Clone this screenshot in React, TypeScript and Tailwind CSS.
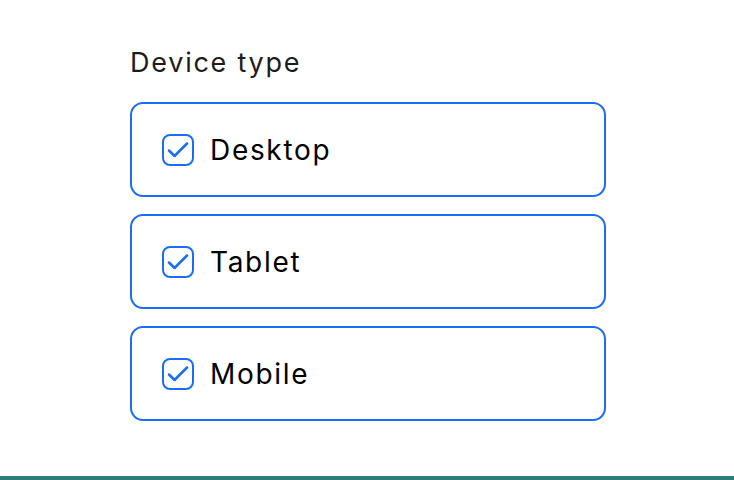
import React from 'react';

const devices = ['Desktop', 'Tablet', 'Mobile'];

function CheckIcon() {
  return (
    <svg width="32" height="32" viewBox="0 0 32 32" fill="none" className="shrink-0">
      <rect x="1" y="1" width="30" height="30" rx="7" stroke="#1a6ef5" strokeWidth="2" />
      <path d="M7 16.5l5.5 5.5 12.5-12.5" stroke="#1a6ef5" strokeWidth="2.5" strokeLinecap="round" strokeLinejoin="round" />
    </svg>
  );
}

export default function App() {
  return (
    <div className="w-[734px] h-[480px] bg-white flex flex-col" style={{ fontFamily: 'Inter, "Noto Sans", sans-serif' }}>
      <div className="flex-1 pl-[130px] pt-[46px]">
        <div className="text-[27px] leading-[34px] tracking-[0.065em] text-[#1c1c1c] mb-[22px]">Device type</div>
        <div className="flex flex-col gap-[17px] w-[476px]">
          {devices.map((d) => (
            <label
              key={d}
              className="h-[95px] border-2 border-[#1a6ef5] rounded-[13px] flex items-center gap-[16px] pl-[30px]"
            >
              <CheckIcon />
              <span className="text-[28px] tracking-[0.06em] text-black">{d}</span>
            </label>
          ))}
        </div>
      </div>
      <div className="h-[4px] bg-[#2a7d78]" />
    </div>
  );
}
